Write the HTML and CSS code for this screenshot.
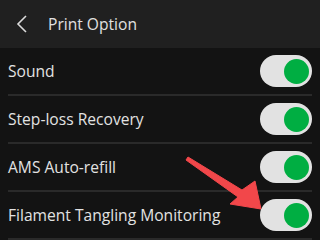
FILE: index.html
```html
<!DOCTYPE html>
<html>
<head>
<meta charset="utf-8">
<link rel="stylesheet" href="styles.css">
</head>
<body>
<div class="screen">
  <header class="header">
    <svg class="back" width="12" height="20" viewBox="0 0 12 20"><polyline points="10,2 2,10 10,18" fill="none" stroke="#dcdcdc" stroke-width="1.6"/></svg>
    <span class="title">Print Option</span>
  </header>
  <div class="list">
    <div class="row"><span class="label">Sound</span><span class="toggle"><span class="knob"></span></span></div>
    <div class="row"><span class="label">Step-loss Recovery</span><span class="toggle"><span class="knob"></span></span></div>
    <div class="row"><span class="label">AMS Auto-refill</span><span class="toggle"><span class="knob"></span></span></div>
    <div class="row"><span class="label">Filament Tangling Monitoring</span><span class="toggle"><span class="knob"></span></span></div>
  </div>
  <svg class="arrow" width="320" height="240" viewBox="0 0 320 240"><polygon points="188,157 242,190 255,181 261,209 230,204 238,197 186,160" fill="#f2474a" stroke="#f2474a" stroke-width="1" stroke-linejoin="round"/></svg>
</div>
</body>
</html>
```
FILE: styles.css
```css
* { box-sizing: border-box; }
html, body { margin: 0; padding: 0; }
body { background: #131313; font-family: "Open Sans", "Liberation Sans", sans-serif; color: #e2e2e2; }
.screen { position: relative; width: 320px; height: 240px; overflow: hidden; background: #131313; }
.header { height: 48px; background: #202020; display: flex; align-items: center; padding-left: 16px; }
.back { display: block; margin-right: 20px; }
.title { font-size: 15.6px; color: #e0e0e0; }
.list { padding: 0 8px; }
.row { height: 48px; display: flex; align-items: center; justify-content: space-between; border-bottom: 2px solid #2a2a2a; }
.label { font-size: 15.6px; color: #e2e2e2; }
.toggle { width: 52px; height: 32px; border-radius: 16px; background: #e2e2e2; display: flex; align-items: center; justify-content: flex-end; padding-right: 3px; }
.knob { width: 25px; height: 25px; border-radius: 50%; background: #00ae42; }
.arrow { position: absolute; left: 0; top: 0; }
```
